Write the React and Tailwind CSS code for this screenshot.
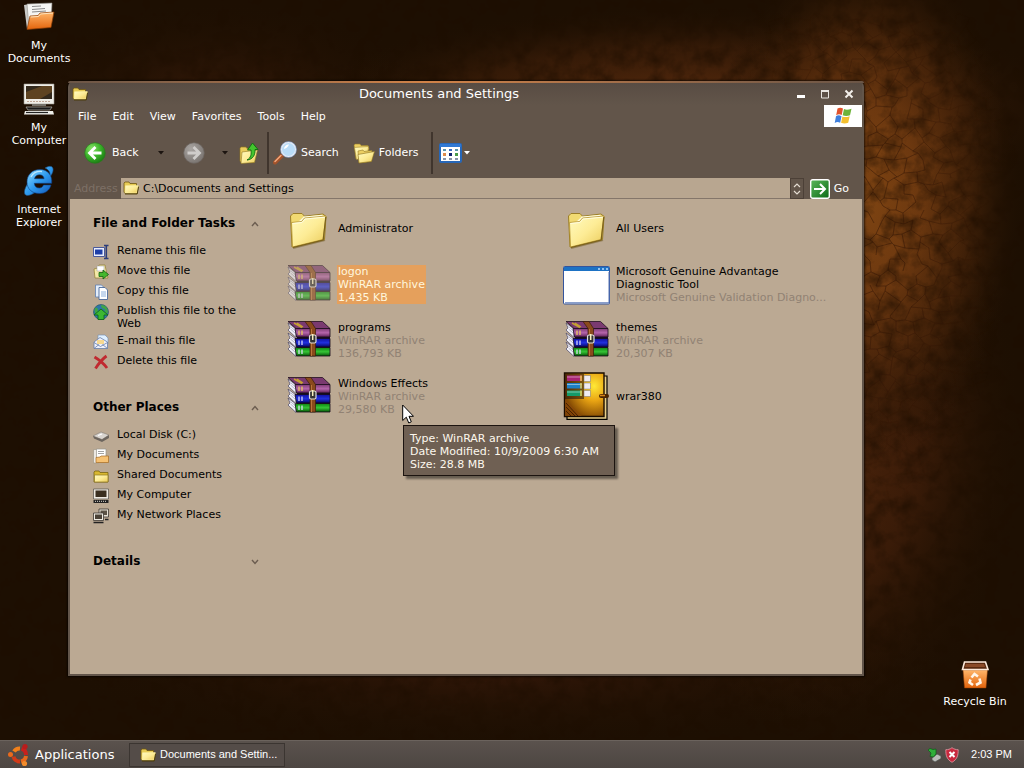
import React, { useState } from "react";

const noise = (n) => {
  const v = Math.sin(n * 127.1 + 311.7) * 43758.5453;
  return v - Math.floor(v);
};

// Cracked leather lines: a honeycomb whose corners are pushed around
const buildCracks = (x0, y0, cols, rows, size) => {
  const corner = (r, c) => {
    const seed = r * 97 + c;
    const zig = (r + c) % 2 ? size * 0.25 : -size * 0.25;
    return [
      Math.round(x0 + c * size + (noise(seed) - 0.5) * size),
      Math.round(y0 + r * size * 1.4 + zig + (noise(seed + 5000) - 0.5) * size),
    ];
  };
  let d = "";
  for (let r = 0; r < rows; r++) {
    for (let c = 0; c < cols; c++) {
      const [x, y] = corner(r, c);
      const [rx, ry] = corner(r, c + 1);
      const [dx, dy] = corner(r + 1, c);
      if (noise(r * 31 + c * 7) > 0.15) d += `M${x} ${y}L${rx} ${ry}`;
      if ((r + c) % 2) d += `M${x} ${y}L${dx} ${dy}`;
    }
  }
  return d;
};

const cracks = buildCracks(600, 20, 44, 44, 9);

const Wallpaper = () => (
  <svg
    className="absolute inset-0 h-full w-full"
    viewBox="0 0 1024 768"
    preserveAspectRatio="none"
    aria-hidden="true"
  >
    <defs>
      <radialGradient id="wpGlow" gradientUnits="userSpaceOnUse" cx="0" cy="0" r="1" gradientTransform="translate(865 200) scale(160 260)">
        <stop offset="0" stopColor="#7e4412" />
        <stop offset="0.35" stopColor="#703a10" stopOpacity="0.95" />
        <stop offset="0.65" stopColor="#4c260a" stopOpacity="0.75" />
        <stop offset="1" stopColor="#1d0f02" stopOpacity="0" />
      </radialGradient>
      <radialGradient id="wpTop" gradientUnits="userSpaceOnUse" cx="0" cy="0" r="1" gradientTransform="translate(690 110) scale(400 105)">
        <stop offset="0" stopColor="#63300f" />
        <stop offset="0.6" stopColor="#44210a" stopOpacity="0.6" />
        <stop offset="1" stopColor="#1d0f02" stopOpacity="0" />
      </radialGradient>
      <radialGradient id="wpLeft" gradientUnits="userSpaceOnUse" cx="0" cy="0" r="1" gradientTransform="translate(220 110) scale(220 110)">
        <stop offset="0" stopColor="#3c1c0a" />
        <stop offset="1" stopColor="#1d0f02" stopOpacity="0" />
      </radialGradient>
      <radialGradient id="wpLow" gradientUnits="userSpaceOnUse" cx="0" cy="0" r="1" gradientTransform="translate(820 430) scale(205 320)">
        <stop offset="0" stopColor="#52270c" />
        <stop offset="0.5" stopColor="#3e1d09" stopOpacity="0.85" />
        <stop offset="1" stopColor="#1d0f02" stopOpacity="0" />
      </radialGradient>
      <radialGradient id="wpFoot" gradientUnits="userSpaceOnUse" cx="0" cy="0" r="1" gradientTransform="translate(500 660) scale(460 90)">
        <stop offset="0" stopColor="#38190a" />
        <stop offset="1" stopColor="#1d0f02" stopOpacity="0" />
      </radialGradient>
      <radialGradient id="wpFade" gradientUnits="userSpaceOnUse" cx="0" cy="0" r="1" gradientTransform="translate(870 220) scale(140 290)">
        <stop offset="0.3" stopColor="#fff" />
        <stop offset="1" stopColor="#000" />
      </radialGradient>
      <mask id="wpMask">
        <rect width="1024" height="768" fill="url(#wpFade)" />
      </mask>
      <filter id="wpGrain" x="0" y="0" width="100%" height="100%" colorInterpolationFilters="sRGB">
        <feTurbulence type="fractalNoise" baseFrequency="0.06" numOctaves="4" seed="8" />
        <feColorMatrix values="0 0 0 0 0.11  0 0 0 0 0.05  0 0 0 0 0  1.2 0 0 0 -0.45" />
      </filter>
    </defs>
    <rect width="1024" height="768" fill="#1d0f02" />
    <rect width="1024" height="768" fill="url(#wpLeft)" />
    <rect width="1024" height="768" fill="url(#wpFoot)" />
    <rect width="1024" height="768" fill="url(#wpLow)" />
    <rect width="1024" height="768" fill="url(#wpTop)" />
    <rect width="1024" height="768" fill="url(#wpGlow)" />
    <rect width="1024" height="768" filter="url(#wpGrain)" />
    <g mask="url(#wpMask)">
      <path d={cracks} fill="none" stroke="#2c1204" strokeWidth="1" opacity="0.45" />
    </g>
  </svg>
);

const Gradients = () => (
  <svg className="absolute h-0 w-0" aria-hidden="true">
    <defs>
      <linearGradient id="gFolder" x1="0" y1="0" x2="1" y2="1">
        <stop offset="0" stopColor="#fffbc0" />
        <stop offset="0.5" stopColor="#fdec96" />
        <stop offset="1" stopColor="#eaca58" />
      </linearGradient>
      <linearGradient id="gOrange" x1="0" y1="0" x2="0" y2="1">
        <stop offset="0" stopColor="#ffb66a" />
        <stop offset="1" stopColor="#e3640c" />
      </linearGradient>
      <radialGradient id="gGreen" cx="0.35" cy="0.3" r="0.8">
        <stop offset="0" stopColor="#8be36a" />
        <stop offset="0.5" stopColor="#3cb52a" />
        <stop offset="1" stopColor="#15720f" />
      </radialGradient>
      <linearGradient id="gGo" x1="0" y1="0" x2="1" y2="1">
        <stop offset="0" stopColor="#5cb85c" />
        <stop offset="1" stopColor="#0b6a14" />
      </linearGradient>
      <radialGradient id="gGrey" cx="0.35" cy="0.3" r="0.8">
        <stop offset="0" stopColor="#a9a5a2" />
        <stop offset="1" stopColor="#77716d" />
      </radialGradient>
      <linearGradient id="gBlue" x1="0" y1="0" x2="1" y2="1">
        <stop offset="0" stopColor="#8fdcff" />
        <stop offset="0.5" stopColor="#2f9bee" />
        <stop offset="1" stopColor="#1257b8" />
      </linearGradient>
      <linearGradient id="gPurple" x1="0" y1="0" x2="0" y2="1">
        <stop offset="0" stopColor="#7c3a72" />
        <stop offset="0.5" stopColor="#b565ab" />
        <stop offset="1" stopColor="#5a1f54" />
      </linearGradient>
      <linearGradient id="gNavy" x1="0" y1="0" x2="0" y2="1">
        <stop offset="0" stopColor="#1010a0" />
        <stop offset="0.5" stopColor="#2030e0" />
        <stop offset="1" stopColor="#040460" />
      </linearGradient>
      <linearGradient id="gLeaf" x1="0" y1="0" x2="0" y2="1">
        <stop offset="0" stopColor="#0b8410" />
        <stop offset="0.5" stopColor="#36c436" />
        <stop offset="1" stopColor="#045407" />
      </linearGradient>
      <radialGradient id="gGold" cx="0.75" cy="0.3" r="0.85">
        <stop offset="0" stopColor="#ffe936" />
        <stop offset="0.4" stopColor="#e9a413" />
        <stop offset="1" stopColor="#6b3400" />
      </radialGradient>
    </defs>
  </svg>
);

const FolderIcon = ({ className = "h-4 w-4" }) => (
  <svg className={`shrink-0 ${className}`} viewBox="0 0 16 16">
    <path d="M1 3l1-1h4l1 1.500h6.500V6h2L14 13.500H2L1 12z" fill="#e8cc55" stroke="#6e5712" strokeWidth=".8" />
    <path d="M2.500 5.800l12.800-.3-1.500 7.500H2.200z" fill="url(#gFolder)" stroke="#fff6b0" strokeWidth=".5" />
    <path d="M2 14h12.200l1.300-7" fill="none" stroke="#4a3a08" strokeWidth=".9" />
  </svg>
);

const BigFolder = () => (
  <svg className="h-12 w-12" viewBox="0 0 48 48">
    <path d="M8 44l32-8" stroke="#6c5620" strokeWidth="2" opacity=".5" />
    <path d="M5.500 12L8 9.500h9l2.500 2.700L38 10l3 2.500-1.500 23L7 43z" fill="#f1da72" stroke="#9b7e28" />
    <path d="M19 12.500l18.500-1.800v6L12 19z" fill="#fffce0" />
    <path d="M6.500 18.500l10-1 3-3.500 21.500-2-3 23.500L7.500 43z" fill="url(#gFolder)" stroke="#b3912e" strokeWidth=".8" />
    <path d="M7.500 19.500l9.500-1 3-3.500 19.800-1.800" fill="none" stroke="#fffde0" />
    <path d="M40.800 13l-2.600 23L8 43.500" fill="none" stroke="#7a611c" strokeWidth="1.200" />
  </svg>
);

const Book = ({ y, fill, first }) => (
  <g>
    <path d={`M3 ${y}l8 6v8.500L3 ${y + 7}l2-2z`} fill="#f3f3fa" stroke="#4a4664" strokeWidth=".7" />
    <path d={`M5.500 ${y + 3.500}l5 4.500M5.500 ${y + 6}l5 4.500`} stroke="#a5a5c0" strokeWidth=".8" />
    <path d={`M10 ${y + 5.500}h35v8.500H11.500z`} fill={fill} stroke="#160a1a" strokeWidth=".8" />
    <path d={`M14 ${y + 7.500}v4.500M17 ${y + 7.500}v4.500`} stroke={first ? "#f0d25a" : "#e2e2ff"} strokeWidth="1.200" />
  </g>
);

const RarIcon = () => (
  <svg className="h-12 w-12" viewBox="0 0 48 48">
    <path d="M12 12h33v28H12z" fill="#15101c" />
    <Book y={26} fill="url(#gLeaf)" />
    <Book y={17} fill="url(#gNavy)" />
    <Book y={7} fill="url(#gPurple)" first />
    <path d="M3 5.500h34.500L45 12.500H11z" fill="#7a3a70" stroke="#22101f" strokeWidth=".8" />
    <path d="M9 7l8 4.500M12 7l6 4" stroke="#c4a032" strokeWidth="1.500" />
    <path d="M20 5.500h6l4.500 7V40H25V12.500z" fill="#8a4a1c" stroke="#3a1c08" strokeWidth=".7" />
    <path d="M26.500 13v27" stroke="#b9743a" />
    <rect x="24.500" y="19" width="6.500" height="8" rx="1.500" fill="#333" stroke="#dedede" strokeWidth="1.200" />
    <path d="M27.700 18v6" stroke="#f7f0c0" strokeWidth="1.500" />
  </svg>
);

const AppWindowIcon = () => (
  <svg className="h-12 w-12" viewBox="0 0 48 48">
    <rect x=".5" y="6.500" width="46" height="37.500" rx="1" fill="#fff" stroke="#34549c" />
    <path d="M1 11V7h45v4z" fill="#1d72c4" />
    <path d="M35 9h2M39 9h2M43 9h2" stroke="#b9dcff" strokeWidth="1.500" />
    <path d="M2 42.800h44V12" fill="none" stroke="#5875b4" />
  </svg>
);

const SetupIcon = () => (
  <svg className="h-12 w-12" viewBox="0 0 48 48">
    <path d="M4 4h40v43.300H4z" fill="#e8cf8a" stroke="#000" strokeWidth="1.200" />
    <path d="M1.500 1h39.500v43.500H1.500z" fill="url(#gGold)" stroke="#1a0c00" strokeWidth="1.400" />
    <path d="M2 27l17 17H2z" fill="#8a4a08" opacity=".7" />
    <path d="M3 31l12 13M3 35l9 9M3 39l5 5" stroke="#3f1c00" strokeWidth=".9" />
    <path d="M2 2h19v25H2z" fill="#2c1808" opacity=".6" />
    <path d="M4 3.500h15v5.500H4z" fill="#a82474" />
    <path d="M4 11h15v5.500H4z" fill="#1e7fc4" />
    <path d="M4 18.500h15V24H4z" fill="#149a68" />
    <path d="M4 5h15M4 12.500h15M4 20h15" stroke="#fff" opacity=".45" />
    <path d="M18 3.500V9M18 11v5.500M18 18.500V24" stroke="#efc94e" strokeWidth="1.500" />
    <path d="M21 3.500h6.500v6H21zM21 11h6.500v6H21zM21 18.500h6.500v6H21z" fill="#f0ecf0" stroke="#77706a" strokeWidth=".5" />
    <path d="M38 24h6" stroke="#4a2400" strokeWidth="4" strokeLinecap="round" />
    <path d="M37 23.500h5" stroke="#d6861c" strokeWidth="1.500" />
  </svg>
);

/* Desktop icons */

const DocumentsIcon = () => (
  <svg className="h-8 w-8" viewBox="0 0 32 32">
    <path d="M1 4l6-1 3 22-6 3z" fill="#c9c9c7" />
    <path d="M4 3l25-1-1 20-22 5z" fill="#f5f5f3" stroke="#8f8d88" strokeWidth=".6" />
    <path d="M9 5.500l9-.5M9 8.500l13-1M9 11l14-1" stroke="#8a8a8a" />
    <path d="M7 15l8-.5 2-2.500 14-1-3 15.500-24 2z" fill="url(#gOrange)" stroke="#8e3d04" strokeWidth=".7" />
    <path d="M7.500 16l8-.5 2-2.500 12.500-1" fill="none" stroke="#ffe3bd" />
  </svg>
);

const ComputerIcon = () => (
  <svg className="h-8 w-8" viewBox="0 0 32 32">
    <path d="M1 1h30v20H1z" fill="#f0eee8" stroke="#99948a" strokeWidth=".6" />
    <path d="M3 3h26v13H3z" fill="#33291c" />
    <path d="M3 16V9l16-6h10v6l-12 7z" fill="#7b5524" opacity=".6" />
    <path d="M4 18.500h24" stroke="#c0a898" strokeDasharray="2 1" />
    <path d="M9 21h14v2H9z" fill="#77736b" />
    <path d="M3 24h26l-2 3H5z" fill="#191919" stroke="#b5b2ab" strokeWidth=".7" />
    <path d="M2 28h28l1 3.500H1z" fill="#efeee9" />
    <path d="M3 29.500h22" stroke="#222" strokeWidth="1.200" />
  </svg>
);

const ExplorerIcon = () => (
  <svg className="h-8 w-8" viewBox="0 0 32 32">
    <path d="M22 3c5-3 9-2 8 3-.4 2-1.500 4-3 6 .5-4-.5-7-5-9zM5 18c-4 6-5 12-1 12.500 2 .2 5-1 8-3-4-1-6-5-7-9.500z" fill="url(#gBlue)" stroke="#1f4c78" strokeWidth=".6" />
    <path d="M17 4.500C9 4.500 4 10 4 17c0 7 5 11.500 12.500 11.500 6 0 10-3 11.500-8.500h-7.500c-.8 2-2 3-4.300 3-3 0-4.700-1.700-4.900-4.700h17.400C29.500 10 24.500 4.500 17 4.500zm-5.500 9.200c.6-2.500 2.300-3.900 5-3.900 2.600 0 4.300 1.400 4.600 3.900z" fill="url(#gBlue)" stroke="#0e3f86" strokeWidth=".6" />
    <path d="M8 12c2-4 6-6 11-5.500" fill="none" stroke="#d6f3ff" strokeWidth="1.300" opacity=".8" />
  </svg>
);

const BinIcon = () => (
  <svg className="h-8 w-8" viewBox="0 0 32 32">
    <path d="M5 5h22l1 7H4z" fill="#5a2a10" />
    <path d="M4 13h24.500l-1.500 18H5.500z" fill="url(#gOrange)" stroke="#8e3d04" strokeWidth=".5" />
    <path d="M5.500 5h21l2.500 7.500H3.500z" fill="none" stroke="#fbe9da" strokeWidth="1.600" />
    <path d="M7 7h18l1 3H6z" fill="#8a4a28" />
    <g fill="none" stroke="#fff5e8" strokeWidth="2.600">
      <path d="M12.500 20.500l3-3.500 3.500 2.500" />
      <path d="M20.500 21.500l1 4-4.500 2.500" />
      <path d="M14 28l-3.500-2.500 1-3" />
    </g>
  </svg>
);

/* Toolbar icons */

const RoundArrow = ({ back }) => (
  <svg className="h-[22px] w-[22px]" viewBox="0 0 22 22">
    <circle cx="11" cy="11" r="10.300" fill={back ? "url(#gGreen)" : "url(#gGrey)"} stroke={back ? "#2c7a20" : "#6d6662"} strokeWidth=".7" />
    <path
      d={back ? "M17.500 11H6M11.500 5L5.500 11l6 6" : "M4.500 11H16M10.500 5l6 6-6 6"}
      fill="none"
      stroke={back ? "#fff" : "#cfccca"}
      strokeWidth="2.800"
    />
  </svg>
);

const UpFolderIcon = () => (
  <svg className="h-[22px] w-[20px]" viewBox="0 0 20 22">
    <path d="M1 6l1-1h5l1 1.500h7l-1 14H2L1 19z" fill="#e9cc5c" stroke="#8d7220" strokeWidth=".7" />
    <path d="M3 10l15.500-2-3 12.500L2 21.500z" fill="url(#gFolder)" stroke="#927722" strokeWidth=".6" />
    <path d="M8 18c4-2 4.500-6 4-10H8.500L13.500 1l5.500 6.500h-3c.5 5-2 10-8 10.500z" fill="#43c42e" stroke="#0e6a10" strokeWidth=".9" />
  </svg>
);

const SearchIcon = () => (
  <svg className="h-[24px] w-[24px]" viewBox="0 0 24 24">
    <path d="M2 21.500l7.500-7.500" stroke="#a2522a" strokeWidth="4" strokeLinecap="round" />
    <path d="M2 20.500l6-6" stroke="#f2a87e" strokeWidth="1.500" strokeLinecap="round" />
    <circle cx="15.500" cy="8.500" r="7.300" fill="#b9dcf8" stroke="#e6ecf6" strokeWidth="1.600" />
    <circle cx="15.500" cy="8.500" r="8" fill="none" stroke="#5c7cb0" strokeWidth=".5" />
    <path d="M11 8a4.500 4.500 0 0 1 5-4.500c-1 2-2 4-5 4.500z" fill="#fff" />
  </svg>
);

const FoldersIcon = () => (
  <svg className="h-[22px] w-[22px]" viewBox="0 0 22 22">
    <path d="M1 3l1-1h5l1 1.500h7l1 3L13 17H3z" fill="#eccf62" stroke="#947a28" strokeWidth=".6" />
    <path d="M1.500 5.500l14-1-1 10-11 3z" fill="url(#gFolder)" stroke="#947a28" strokeWidth=".5" />
    <path d="M5 9l5-1 1 1.500 8-1-1 11-12 1.500z" fill="#eccf62" stroke="#947a28" strokeWidth=".6" />
    <path d="M5 12.500l16.500-3-3 10-12.500 1.500z" fill="url(#gFolder)" stroke="#8a6e1c" strokeWidth=".6" />
  </svg>
);

const ViewsIcon = () => (
  <svg className="h-[20px] w-[23px]" viewBox="0 0 23 20">
    <rect x="1" y="1" width="21" height="18" rx="1" fill="#fff" stroke="#2767b8" strokeWidth="2" />
    <path d="M1 1h21v3H1z" fill="#2f78d4" />
    <path d="M4 6h3v2H4zM16 6h3v2h-3z" fill="#5a92a8" />
    <path d="M10 6h3v2h-3z" fill="#3b6cc0" />
    <path d="M4 10h3v3H4z" fill="#dc8a4a" />
    <path d="M10 10h3v3h-3z" fill="#12246e" />
    <path d="M16 10h3v3h-3z" fill="#4a9c4a" />
    <path d="M4 15h3v2H4zM10 15h3v2h-3zM16 15h3v2h-3z" fill="#8894a8" />
  </svg>
);

const Caret = ({ className }) => (
  <svg className={`h-1 w-1.5 ${className}`} viewBox="0 0 6 4">
    <path d="M0 0h6L3 3.500z" fill="currentColor" />
  </svg>
);

const FlagIcon = () => (
  <svg className="h-[18px] w-[20px]" viewBox="0 0 20 18">
    <path d="M4.500 1.500c2-1.200 3.700-1 5.500 0L8.700 8c-2-1-3.500-1-5.500.2z" fill="#e0532c" />
    <path d="M11 2c2 1 4 .9 7.500-.2L17 8.300c-2.500 1-5 1-7.300 0z" fill="#6db33a" />
    <path d="M3 9.200c2-1.200 3.500-1 5.500 0L7.200 15.700c-2-1-3.500-1-5.500.2z" fill="#3f7fdc" />
    <path d="M9.400 9.400c2 1 4 .9 7.300-.2l-1.500 6.600c-2.500 1-4.800 1-7.100 0z" fill="#f3bf2e" />
  </svg>
);

const GoIcon = () => (
  <svg className="h-5 w-5" viewBox="0 0 20 20">
    <rect x=".7" y=".7" width="18.600" height="18.600" rx="2" fill="url(#gGo)" stroke="#fff" strokeWidth="1.400" />
    <path d="M4 10h11M10 5l5 5-5 5" fill="none" stroke="#fff" strokeWidth="2" />
  </svg>
);

/* Side panel icons */

const smallIcons = {
  rename: (
    <>
      <path d="M.5 3.500h11v9H.5z" fill="#e9eefc" stroke="#4a5a9c" />
      <path d="M2 5.500h7.500v5H2z" fill="#1e3fa8" />
      <path d="M11 1.500h4.500M11 14.500h4.500M13.300 1.500v13" stroke="#2b3c78" strokeWidth="1.600" />
    </>
  ),
  move: (
    <>
      <path d="M1 5l4-1 1-3h6l1 5 2 8H2z" fill="#f4e9a8" stroke="#8f7c30" strokeWidth=".7" />
      <path d="M4 2h7v5H4z" fill="#fff" stroke="#999" strokeWidth=".5" />
      <path d="M6 8.500h4V6l5.500 4.500L10 15v-2.500H6z" fill="#45b72e" stroke="#125e10" strokeWidth=".8" />
    </>
  ),
  copy: (
    <>
      <path d="M2.500 1h6l2 2v10h-8z" fill="#e4eefb" stroke="#5f7fae" strokeWidth=".8" />
      <path d="M6 3.500h6l2.500 2.500v9.500H6z" fill="#fff" stroke="#4a6a9c" strokeWidth=".9" />
      <path d="M8 8h5M8 10h5M8 12h5" stroke="#8cb0dc" />
    </>
  ),
  publish: (
    <>
      <circle cx="8" cy="8" r="7.500" fill="#2d76a8" stroke="#1c4c5e" strokeWidth=".6" />
      <path d="M2 4c3-1 4 2 2 6-2 0-3-3-2-6zM8 1c5 0 7 3 7 8-3 0-4-2-3-4-2 0-4-1-4-4z" fill="#3fa447" />
      <path d="M8 5l7 6h-4v4.500H5V11H1z" fill="#3cb832" stroke="#116a18" strokeWidth=".9" />
    </>
  ),
  email: (
    <>
      <path d="M5 1h7l3 3v6H5z" fill="#dff0ff" stroke="#7b94b4" strokeWidth=".7" />
      <path d="M1 8l6-4.500L14.500 8v6.500H1z" fill="#eef0fa" stroke="#667ea8" strokeWidth=".8" />
      <path d="M4 6h7v4H4z" fill="#f6d890" />
      <path d="M1 8.500l6.500 4 7-4M1 14.500l5-4M14.500 14.500l-5-4" fill="none" stroke="#667ea8" strokeWidth=".8" />
    </>
  ),
  remove: (
    <path d="M1.500 3c5 3 9 6 12.500 11M13.500 2C8 6 6 9 2.500 14.500" fill="none" stroke="#c02a30" strokeWidth="2.800" />
  ),
  disk: (
    <>
      <path d="M0 8l8-4 8 3-7 4.500z" fill="#d9d5d0" stroke="#837c74" strokeWidth=".6" />
      <path d="M0 8l9 3.500V14L1 10.500zM9 11.500L16 7v3l-7 4z" fill="#6c655e" />
      <path d="M5 7.500l4-1.500" stroke="#fff" strokeWidth="1.200" />
    </>
  ),
  documents: (
    <>
      <path d="M.5 1.500h5V15h-5z" fill="#ece8e2" stroke="#a09888" strokeWidth=".7" />
      <path d="M3.500 1h9.500v10H3.500z" fill="#fff" stroke="#9a968e" strokeWidth=".7" />
      <path d="M5 3.500h6M5 5.500h6" stroke="#a4a4a4" />
      <path d="M3 9.500l4-.5 1-1h7.500v6.500H3z" fill="#f6c172" stroke="#a86c22" strokeWidth=".7" />
    </>
  ),
  shared: (
    <>
      <path d="M1 4l1-1h4l1 1.500h8V14H1z" fill="#d9b830" stroke="#7a6410" strokeWidth=".8" />
      <path d="M1.500 7h13.500v7H1.500z" fill="url(#gFolder)" stroke="#8d7620" strokeWidth=".7" />
    </>
  ),
  computer: (
    <>
      <path d="M.5 1h15v10H.5z" fill="#eeeae2" stroke="#55504a" strokeWidth=".7" />
      <path d="M2.500 2.500h11V9h-11z" fill="#3a2f20" />
      <path d="M.5 12h15v3H.5z" fill="#222" />
      <path d="M2 13.300h12" stroke="#e0dcd4" strokeDasharray="1 1" />
    </>
  ),
  network: (
    <>
      <path d="M6 1h9.500v8H6z" fill="#e6e0d4" stroke="#3e3932" strokeWidth=".8" />
      <path d="M7.500 2.500H14V7H7.500z" fill="#5b5245" />
      <path d="M.5 5h10v7.500H.5z" fill="#eeeae0" stroke="#3e3932" strokeWidth=".8" />
      <path d="M2 6.500h7V11H2z" fill="#4b4236" />
      <path d="M.5 14.500h10M12 11.500h3.500" stroke="#222" strokeWidth="1.500" />
    </>
  ),
};

const UbuntuIcon = () => (
  <svg className="h-6 w-6" viewBox="0 0 24 24">
    <g fill="none" strokeWidth="4">
      <path d="M7 8.500A6.500 6.500 0 0 1 13 5.500" stroke="#f0801c" />
      <path d="M14.500 5.600a6.500 6.500 0 0 1 4.500 6.400" stroke="#c8201c" />
      <path d="M19 13a6.500 6.500 0 0 1-5 5.500" stroke="#e8681a" />
      <path d="M13 18.600a6.500 6.500 0 0 1-6.500-5" stroke="#d13a18" />
    </g>
    <circle cx="3.500" cy="11.500" r="2.500" fill="#ea6a1c" />
    <circle cx="18" cy="3.500" r="2.600" fill="#b81c1c" />
    <circle cx="17.500" cy="20.500" r="2.600" fill="#f28c2c" />
  </svg>
);

const UsbIcon = () => (
  <svg className="h-3.5 w-3.5" viewBox="0 0 14 14">
    <path d="M5 10l5-4 4 2v2.500l-6 3.500-3-2z" fill="#b9bcb9" stroke="#4c504c" strokeWidth=".7" />
    <path d="M1 2l2-1.500 3 1 3-.5v5L6.500 9 3 8.500 4 5z" fill="#2fae3a" stroke="#0d5c18" strokeWidth=".7" />
  </svg>
);

const ShieldIcon = () => (
  <svg className="h-4 w-3.5" viewBox="0 0 14 16">
    <path d="M7 .7c2 1.500 4 2 6.200 2 0 5.500-.7 9.500-6.200 12.600C1.500 12.200.8 8.200.8 2.700 3 2.700 5 2.200 7 .7z" fill="#c9283e" stroke="#e09aa4" strokeWidth=".8" />
    <path d="M4.500 5l5 5M9.500 5l-5 5" stroke="#fff" strokeWidth="2" />
  </svg>
);

const desktopIcons = [
  { label: "My Documents", icon: <DocumentsIcon /> },
  { label: "My Computer", icon: <ComputerIcon /> },
  { label: "Internet Explorer", icon: <ExplorerIcon /> },
];

const menus = ["File", "Edit", "View", "Favorites", "Tools", "Help"];

const tasks = [
  { icon: "rename", label: "Rename this file" },
  { icon: "move", label: "Move this file" },
  { icon: "copy", label: "Copy this file" },
  { icon: "publish", label: "Publish this file to the Web" },
  { icon: "email", label: "E-mail this file" },
  { icon: "remove", label: "Delete this file" },
];

const places = [
  { icon: "disk", label: "Local Disk (C:)" },
  { icon: "documents", label: "My Documents" },
  { icon: "shared", label: "Shared Documents" },
  { icon: "computer", label: "My Computer" },
  { icon: "network", label: "My Network Places" },
];

const files = [
  { name: "Administrator", icon: <BigFolder /> },
  { name: "All Users", icon: <BigFolder /> },
  { name: "logon", icon: <RarIcon />, details: ["WinRAR archive", "1,435 KB"] },
  {
    name: "Microsoft Genuine Advantage Diagnostic Tool",
    icon: <AppWindowIcon />,
    details: ["Microsoft Genuine Validation Diagno..."],
  },
  { name: "programs", icon: <RarIcon />, details: ["WinRAR archive", "136,793 KB"] },
  { name: "themes", icon: <RarIcon />, details: ["WinRAR archive", "20,307 KB"] },
  {
    name: "Windows Effects",
    icon: <RarIcon />,
    details: ["WinRAR archive", "29,580 KB"],
    tip: ["Type: WinRAR archive", "Date Modified: 10/9/2009 6:30 AM", "Size: 28.8 MB"],
  },
  { name: "wrar380", icon: <SetupIcon /> },
];

const DesktopIcon = ({ label, icon }) => (
  <button className="flex w-full flex-col items-center gap-1.5 text-center text-white">
    {icon}
    <span>{label}</span>
  </button>
);

const SideSection = ({ title, items = [] }) => (
  <section>
    <button className="flex w-full items-center justify-between text-xs leading-[13px] font-bold">
      {title}
      <svg className="h-1.5 w-2 text-[#6b5d50]" viewBox="0 0 8 6">
        <path
          d={items.length ? "M1 5l3-3.500L7 5" : "M1 1l3 3.500L7 1"}
          fill="none"
          stroke="currentColor"
          strokeWidth="1.400"
        />
      </svg>
    </button>
    {items.length > 0 && (
      <ul className="mt-3.5 flex flex-col gap-1">
        {items.map((item) => (
          <li key={item.label}>
            <a href="#" className="flex min-h-4 gap-2">
              <svg className="h-4 w-4 shrink-0" viewBox="0 0 16 16">
                {smallIcons[item.icon]}
              </svg>
              <span>{item.label}</span>
            </a>
          </li>
        ))}
      </ul>
    )}
  </section>
);

const Tooltip = ({ lines }) => (
  <>
    <div className="absolute top-[57px] left-[118px] z-20 min-w-[212px] border border-[#1c1410] bg-[#6f6053] px-1.5 pt-1.5 pb-1 whitespace-nowrap text-[#fdf8ee] shadow-[3px_3px_2px_rgba(0,0,0,0.45)]">
      {lines.map((line) => (
        <p key={line}>{line}</p>
      ))}
    </div>
    <svg className="absolute top-9 left-[117px] z-20 h-5 w-3" viewBox="0 0 12 20">
      <path d="M.7 1v15.500l3.600-3.300L6.800 19l2.500-1.200L7 12.300h4.500z" fill="#fff" stroke="#000" />
    </svg>
  </>
);

const FileItem = ({ file, selected, onSelect }) => (
  <div className="relative flex h-14 items-center">
    <button onClick={onSelect} className="flex items-center gap-1 text-left">
      <span className={`shrink-0 ${selected ? "opacity-60" : ""}`}>{file.icon}</span>
      <span className={`max-w-56 px-px ${selected ? "bg-[#e5a05c] text-[#fff6dc]" : ""}`}>
        <span className="block">{file.name}</span>
        {file.details?.map((line) => (
          <span key={line} className={`block whitespace-nowrap ${selected ? "" : "text-[#918273]"}`}>
            {line}
          </span>
        ))}
      </span>
    </button>
    {file.tip && <Tooltip lines={file.tip} />}
  </div>
);

const ExplorerWindow = () => {
  const [address, setAddress] = useState("C:\\Documents and Settings");
  const [selected, setSelected] = useState("logon");

  return (
    <main className="absolute top-[81px] right-40 bottom-16 left-[68px] flex flex-col rounded-t-md bg-[#62554a] px-0.5 pb-0.5 text-white shadow-[0_0_2px_1px_rgba(0,0,0,0.6)]">
      <div className="-mx-0.5 h-0.5 shrink-0 rounded-t-md bg-linear-to-r from-[#6a5546] via-[#d08248] via-45% to-[#6a5546]" />

      {/* Title bar */}
      <header className="grid h-[22px] shrink-0 grid-cols-[1fr_auto_1fr] items-center bg-linear-to-b from-[#584c43] to-[#62554a] pl-0.5">
        <FolderIcon />
        <h1 className="mr-14 text-[13px] leading-4">Documents and Settings</h1>
        <div className="flex justify-end gap-2 pr-[5px]">
          <button aria-label="Minimize" className="flex size-4 items-center justify-center">
            <svg className="size-2.5" viewBox="0 0 10 10">
              <path d="M1 7.500h8" stroke="#fff" strokeWidth="3" />
            </svg>
          </button>
          <button aria-label="Maximize" className="flex size-4 items-center justify-center">
            <svg className="size-2.5" viewBox="0 0 10 10">
              <path d="M1.500 9V1.500h7V9z" fill="none" stroke="#e9e5e0" />
              <path d="M1 2h8" stroke="#e9e5e0" strokeWidth="2" />
            </svg>
          </button>
          <button aria-label="Close" className="flex size-4 items-center justify-center">
            <svg className="size-2.5" viewBox="0 0 10 10">
              <path d="M1.500 1.500l7 7M8.500 1.500l-7 7" stroke="#f3efea" strokeWidth="2" />
            </svg>
          </button>
        </div>
      </header>

      {/* Menu bar */}
      <nav className="flex h-[22px] shrink-0 items-center gap-4 pl-2">
        {menus.map((menu) => (
          <button key={menu}>{menu}</button>
        ))}
        <span className="ml-auto flex h-[22px] w-[38px] items-center justify-center bg-white">
          <FlagIcon />
        </span>
      </nav>

      {/* Toolbar */}
      <div className="flex h-[51px] shrink-0 items-center pl-3.5">
        <button className="flex w-[71px] items-center gap-1.5">
          <RoundArrow back />
          Back
        </button>
        <button aria-label="Back history" className="flex w-3 justify-center">
          <Caret className="text-[#1c1410]" />
        </button>
        <button aria-label="Forward" className="ml-4">
          <RoundArrow />
        </button>
        <button aria-label="Forward history" className="ml-3.5 flex w-3 justify-center">
          <Caret className="text-[#1c1410]" />
        </button>
        <button aria-label="Up" className="ml-2">
          <UpFolderIcon />
        </button>
        <div className="ml-2 h-[42px] w-0.5 bg-[#40352d]" />
        <button className="ml-1 flex items-center gap-1">
          <SearchIcon />
          Search
        </button>
        <button className="ml-3.5 flex items-center gap-1">
          <FoldersIcon />
          Folders
        </button>
        <div className="ml-3 h-[42px] w-0.5 bg-[#40352d]" />
        <button aria-label="Views" className="ml-1.5 flex items-center gap-0.5">
          <ViewsIcon />
          <Caret className="text-white" />
        </button>
      </div>

      {/* Address bar */}
      <form className="flex h-[21px] shrink-0 items-center" onSubmit={(e) => e.preventDefault()}>
        <label htmlFor="address" className="w-[51px] pl-1 text-[#7d7066]">
          Address
        </label>
        <div className="flex h-full flex-1 items-center gap-1 border-b border-[#84766a] bg-[#b8a690] pl-0.5 text-black">
          <FolderIcon />
          <input
            id="address"
            value={address}
            onChange={(e) => setAddress(e.target.value)}
            className="min-w-0 flex-1 leading-[13px] outline-none"
          />
        </div>
        <button type="button" aria-label="Show addresses" className="flex h-full w-3.5 items-center justify-center border border-[#4c4037]">
          <svg className="h-3 w-2" viewBox="0 0 8 12">
            <path d="M1 4l3-3 3 3M1 8l3 3 3-3" fill="none" stroke="#e4dcd2" strokeWidth="1.200" />
          </svg>
        </button>
        <button className="mr-[13px] ml-1.5 flex items-center gap-1">
          <GoIcon />
          Go
        </button>
      </form>

      {/* Content */}
      <div className="flex min-h-0 flex-1 overflow-hidden bg-[#bba993] text-black">
        <aside className="flex w-[215px] shrink-0 flex-col gap-[31px] pt-[18px] pr-[26px] pl-[23px]">
          <SideSection title="File and Folder Tasks" items={tasks} />
          <SideSection title="Other Places" items={places} />
          <SideSection title="Details" />
        </aside>
        <div className="grid flex-1 grid-cols-[repeat(auto-fill,278px)] content-start pt-px">
          {files.map((file) => (
            <FileItem
              key={file.name}
              file={file}
              selected={selected === file.name}
              onSelect={() => setSelected(file.name)}
            />
          ))}
        </div>
      </div>
    </main>
  );
};

const Taskbar = () => (
  <footer className="relative flex h-7 shrink-0 items-center border-t border-[#6b635d] bg-linear-to-b from-[#5a524d] to-[#4d4642] text-white">
    <button className="flex w-[129px] items-center gap-1 pl-[7px] text-[13px]">
      <UbuntuIcon />
      Applications
    </button>
    <button className="flex h-6 w-[156px] items-center gap-1 border border-[#3b3531] bg-[#544c48] pl-2.5 font-['Liberation_Sans',sans-serif]">
      <FolderIcon />
      Documents and Settin...
    </button>
    <div className="ml-auto flex items-center gap-1 pr-3 font-['Liberation_Sans',sans-serif]">
      <UsbIcon />
      <ShieldIcon />
      <time className="ml-2">2:03 PM</time>
    </div>
  </footer>
);

const App = () => (
  <div className="relative flex h-screen flex-col overflow-hidden font-['DejaVu_Sans',sans-serif] text-[11px] leading-[13px]">
    <Gradients />
    <Wallpaper />
    <div className="relative min-h-0 flex-1">
      <div className="flex w-[78px] flex-col gap-[18px] px-1 pt-px">
        {desktopIcons.map((item) => (
          <DesktopIcon key={item.label} {...item} />
        ))}
      </div>
      <div className="absolute right-2 bottom-8 w-[82px]">
        <DesktopIcon label="Recycle Bin" icon={<BinIcon />} />
      </div>
      <ExplorerWindow />
    </div>
    <Taskbar />
  </div>
);

export default App;
